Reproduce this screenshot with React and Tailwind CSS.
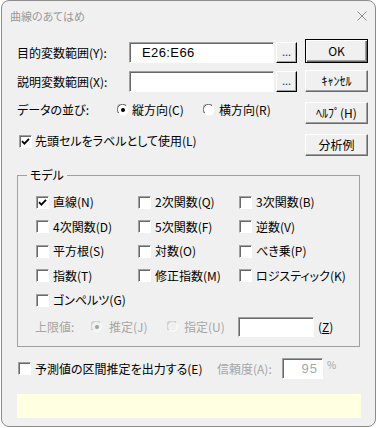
import React from 'react';

const raised =
  'bg-[#f0f0f0] border border-t-white border-l-white border-b-[#696969] border-r-[#696969] shadow-[inset_-1px_-1px_0_#a0a0a0]';
const sunken =
  'bg-white border border-t-[#a0a0a0] border-l-[#a0a0a0] border-b-white border-r-white shadow-[inset_1px_1px_0_#696969]';

const Button = ({ children, className = '', isDefault }) => (
  <div
    className={`flex items-center justify-center text-[12px] ${
      isDefault
        ? 'border border-black bg-[#f0f0f0] shadow-[inset_1px_1px_0_#fff,inset_-1px_-1px_0_#696969,inset_-2px_-2px_0_#a0a0a0]'
        : raised
    } ${className}`}
  >
    {children}
  </div>
);

const Check = ({ checked }) => (
  <div className={`w-[13px] h-[13px] shrink-0 ${sunken} flex items-center justify-center`}>
    {checked && (
      <svg width="9" height="9" viewBox="0 0 9 9">
        <path d="M1 4.2 L3.4 6.6 L8 1.8" fill="none" stroke="#000" strokeWidth="1.8" />
      </svg>
    )}
  </div>
);

const Radio = ({ checked, disabled }) => (
  <svg width="12" height="12" viewBox="0 0 12 12" className="shrink-0">
    <circle cx="6" cy="6" r="5.5" fill={disabled ? '#f0f0f0' : '#fff'} />
    <path d="M1.2 9 A5 5 0 0 1 9 1.2" fill="none" stroke={disabled ? '#c0c0c0' : '#a0a0a0'} strokeWidth="1" />
    <path d="M1.9 9.2 A4.2 4.2 0 0 1 9.2 1.9" fill="none" stroke={disabled ? '#d0d0d0' : '#696969'} strokeWidth="1" />
    <path d="M9.5 2.5 A5 5 0 0 1 2.5 9.5" fill="none" stroke="#fff" strokeWidth="1" />
    {checked && <circle cx="6" cy="6" r="2" fill={disabled ? '#a0a0a0' : '#000'} />}
  </svg>
);

const models = [
  ['直線(N)', true],
  ['2次関数(Q)'],
  ['3次関数(B)'],
  ['4次関数(D)'],
  ['5次関数(F)'],
  ['逆数(V)'],
  ['平方根(S)'],
  ['対数(O)'],
  ['べき乗(P)'],
  ['指数(T)'],
  ['修正指数(M)'],
  ['ロジスティック(K)'],
  ['ゴンペルツ(G)'],
];

export default function App() {
  return (
    <div className="w-[377px] h-[428px] bg-white pl-[1px] text-black font-['Noto_Sans_CJK_JP',sans-serif] [font-feature-settings:'palt'] text-[12px] leading-[14px]">
      <div className="w-[375px] h-[427px] bg-[#f0f0f0] border border-[#8c8c8c] rounded-[8px] flex flex-col">
        {/* title bar */}
        <div className="h-[29px] flex items-center justify-between pl-[8px] pr-[8px]">
          <span className="text-[11px] text-[#9a9a9a]">曲線のあてはめ</span>
          <svg width="10" height="10" viewBox="0 0 10 10">
            <path d="M0.5 0.5 L9.5 9.5 M9.5 0.5 L0.5 9.5" stroke="#8a8a8a" strokeWidth="1" />
          </svg>
        </div>

        {/* top section */}
        <div className="flex pl-[15px]">
          <div className="w-[280px] flex flex-col">
            <div className="mt-[12px] h-[21px] flex items-center">
              <span className="w-[112px]">目的変数範囲(Y):</span>
              <div className={`w-[145px] h-full ${sunken} flex items-center pl-[12px] font-['Liberation_Sans',sans-serif] text-[13px] tracking-[0.4px]`}>
                E26:E66
              </div>
              <Button className="ml-[2px] w-[21px] h-full !text-[11px] text-[#1a3a8a] leading-none pb-[3px] border-b-black border-r-black">...</Button>
            </div>
            <div className="mt-[8px] h-[21px] flex items-center">
              <span className="w-[112px]">説明変数範囲(X):</span>
              <div className={`w-[145px] h-full ${sunken}`} />
              <Button className="ml-[2px] w-[21px] h-full !text-[11px] text-[#1a3a8a] leading-none pb-[3px] border-b-black border-r-black">...</Button>
            </div>
            <div className="mt-[9px] h-[18px] flex items-center">
              <span className="w-[100px]">データの並び:</span>
              <div className="w-[86px] flex items-center gap-[3px]">
                <Radio checked />
                <span>縦方向(C)</span>
              </div>
              <div className="flex items-center gap-[4px]">
                <Radio />
                <span>横方向(R)</span>
              </div>
            </div>
            <div className="mt-[13px] h-[18px] flex items-center pl-[2px] gap-[3px]">
              <Check checked />
              <span>先頭セルをラベルとして使用(L)</span>
            </div>
          </div>

          <div className="ml-[8px] w-[63px] flex flex-col">
            <Button isDefault className="mt-[9px] h-[24px]">OK</Button>
            <Button className="mt-[7px] h-[22px]">ｷｬﾝｾﾙ</Button>
            <Button className="mt-[10px] h-[22px]">ﾍﾙﾌﾟ(H)</Button>
            <Button className="mt-[10px] h-[22px]">分析例</Button>
          </div>
        </div>

        {/* model group */}
        <fieldset className="mt-[12px] ml-[15px] w-[343px] border border-[#a0a0a0] pb-[9px]">
          <legend className="ml-[9px] px-[3px]">モデル</legend>
          <div className="pt-[11px] pl-[18px] grid grid-cols-[102px_101px_1fr] gap-y-[6.5px]">
            {models.map(([label, on]) => (
              <div key={label} className="h-[18px] flex items-center gap-[4px] whitespace-nowrap">
                <Check checked={on} />
                <span>{label}</span>
              </div>
            ))}
          </div>
          <div className="mt-[8px] h-[20px] flex items-center pl-[17px] text-[#a6a6a6]">
            <span className="w-[56px]">上限値:</span>
            <div className="w-[76px] flex items-center gap-[6px]">
              <Radio checked disabled />
              <span>推定(J)</span>
            </div>
            <div className="w-[71px] flex items-center gap-[5px]">
              <Radio disabled />
              <span>指定(U)</span>
            </div>
            <div className={`w-[76px] h-full ${sunken}`} />
            <span className="ml-[4px] text-black">
              (<span className="underline">Z</span>)
            </span>
          </div>
        </fieldset>

        {/* interval estimate */}
        <div className="mt-[11px] h-[21px] flex items-center pl-[16px]">
          <div className="w-[199px] flex items-center gap-[4px]">
            <Check />
            <span>予測値の区間推定を出力する(E)</span>
          </div>
          <span className="w-[65px] text-[#a6a6a6]">信頼度(A):</span>
          <div className={`w-[41px] h-full ${sunken} flex items-center justify-end pr-[4px] text-[#a6a6a6] font-['Liberation_Sans',sans-serif] text-[13px] tracking-[1px]`}>
            95
          </div>
          <span className="ml-[4px] self-start text-[10px] text-[#a6a6a6]">%</span>
        </div>

        {/* status */}
        <div className="mt-[15px] ml-[15px] w-[344px] h-[24px] bg-[#ffffe1]" />
      </div>
    </div>
  );
}
